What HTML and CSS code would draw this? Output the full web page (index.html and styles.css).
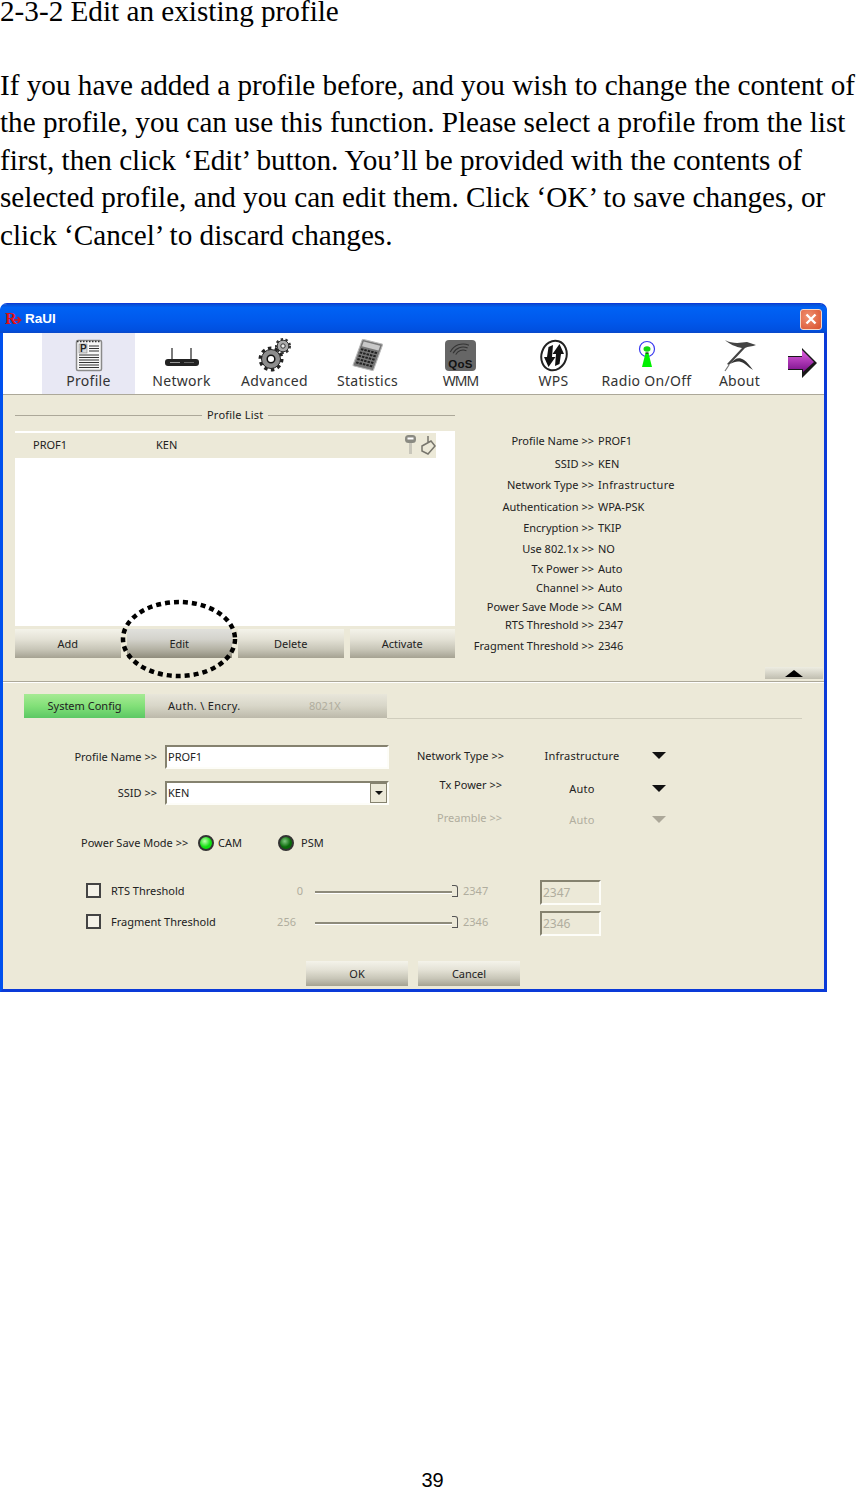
FILE: index.html
```html
<!DOCTYPE html>
<html lang="en">
<head>
    <meta charset="UTF-8">
    <title>2-3-2 Edit an existing profile</title>
    <link rel="stylesheet" href="styles.css">
</head>
<body>
<div class="page">
    <h2 class="heading">2-3-2 Edit an existing profile</h2>
    <p class="intro">If you have added a profile before, and you wish to change the content of<br>
        the profile, you can use this function. Please select a profile from the list<br>
        first, then click ‘Edit’ button. You’ll be provided with the contents of<br>
        selected profile, and you can edit them. Click ‘OK’ to save changes, or<br>
        click ‘Cancel’ to discard changes.</p>

    <div class="window">
        <div class="titlebar">
            <svg class="logo" width="20" height="22" viewBox="0 0 20 22">
                <text x="0" y="16" font-family="Liberation Serif" font-size="16" font-weight="bold" fill="#e01010">R</text>
                <path d="M9 12h6M12.500 9l3 3-3 3" fill="none" stroke="#e01010" stroke-width="1.600"/>
            </svg>
            <span class="title">RaUI</span>
            <span class="close">
                <svg width="12" height="12" viewBox="0 0 12 12"><path d="M1.500 1.500l9 9M10.500 1.500l-9 9" stroke="#fff" stroke-width="2.400"/></svg>
            </span>
        </div>

        <div class="toolbar">
            <div class="tool tool-on">
                <svg width="30" height="33" viewBox="0 0 30 33">
                    <rect x="2.500" y="1.500" width="25" height="30" rx="1.500" fill="#f7f7f7" stroke="#8a8a8a" stroke-width="1.500"/>
                    <path d="M3 2.500h24" stroke="#333" stroke-width="1.500" stroke-dasharray="1.500 1.500"/>
                    <rect x="5" y="5" width="8" height="9" fill="#d8d8d8" stroke="#777" stroke-width=".5"/>
                    <text x="6" y="13" font-family="Liberation Sans" font-size="10" font-weight="bold" fill="#222">P</text>
                    <path d="M15 7h10M15 9.500h10M15 12h10M5 16h20M5 18.500h20M5 21h20M5 23.500h20M5 26h20M5 28.500h20" stroke="#333" stroke-width="1.100"/>
                </svg>
                <span>Profile</span>
            </div>
            <div class="tool">
                <svg width="36" height="33" viewBox="0 0 36 33">
                    <path d="M8 9v12M27 9v12" stroke="#444" stroke-width="1.400"/>
                    <rect x="1" y="20" width="34" height="7" rx="3" fill="#222"/>
                    <path d="M6 23.500h10" stroke="#999" stroke-width="1"/>
                    <path d="M20 23.500h10" stroke="#666" stroke-width="1"/>
                </svg>
                <span>Network</span>
            </div>
            <div class="tool">
                <svg width="36" height="35" viewBox="0 0 36 35">
                    <circle cx="14" cy="22" r="10.500" fill="none" stroke="#222" stroke-width="4" stroke-dasharray="3.300 3.300"/>
                    <circle cx="14" cy="22" r="9.500" fill="#8c8c8c" stroke="#222"/>
                    <circle cx="14" cy="22" r="3.800" fill="#fff" stroke="#111" stroke-width="1.500"/>
                    <circle cx="26" cy="9" r="6.500" fill="none" stroke="#333" stroke-width="3" stroke-dasharray="2.300 2.300"/>
                    <circle cx="26" cy="9" r="5.800" fill="#aaa" stroke="#333"/>
                    <circle cx="26" cy="9" r="2.200" fill="#eee" stroke="#333"/>
                </svg>
                <span>Advanced</span>
            </div>
            <div class="tool">
                <svg width="34" height="33" viewBox="0 0 34 33">
                    <g transform="rotate(14 17 16) skewX(-6)">
                        <rect x="8" y="2" width="21" height="28" rx="1" fill="#777" stroke="#bbb"/>
                        <rect x="10" y="4" width="17" height="5" fill="#c8c8c8"/>
                        <path d="M10 12h17M10 15.500h17M10 19h17M10 22.500h17M10 26h17" stroke="#222" stroke-width="2" stroke-dasharray="2.500 1"/>
                    </g>
                </svg>
                <span>Statistics</span>
            </div>
            <div class="tool">
                <svg width="33" height="33" viewBox="0 0 33 33">
                    <rect x="1" y="1" width="31" height="31" rx="4" fill="#666"/>
                    <path d="M11 19a8 8 0 0 1 8-8M8 19a11 11 0 0 1 11-11M5 19a14 14 0 0 1 14-14" transform="rotate(25 19 19)" fill="none" stroke="#333" stroke-width="1.100"/>
                    <text x="16.500" y="29" text-anchor="middle" font-family="Liberation Sans" font-size="11.500" font-weight="bold" fill="#111">QoS</text>
                </svg>
                <span class="tight">WMM</span>
            </div>
            <div class="tool">
                <svg width="32" height="33" viewBox="0 0 32 33">
                    <ellipse cx="16" cy="16.500" rx="12.500" ry="15" transform="rotate(18 16 16.500)" fill="#fff" stroke="#222" stroke-width="2"/>
                    <path d="M15 6l-1 12h3.500l-7 10-4.500-10h3l1.500-10z" fill="#111"/>
                    <path d="M17 27l1-12h-3.500l7-10 4.500 10h-3l-1.500 10z" fill="#111"/>
                </svg>
                <span>WPS</span>
            </div>
            <div class="tool">
                <svg width="20" height="33" viewBox="0 0 20 33">
                    <circle cx="10" cy="10" r="7.500" fill="#fff" stroke="#3a3af0" stroke-width="1.200"/>
                    <ellipse cx="10" cy="10" rx="3.500" ry="2.800" fill="#10d810"/>
                    <path d="M8.500 14h3l3.500 14h-10z" fill="#00f000"/>
                    <path d="M8.500 14h3" stroke="#111" stroke-width="1.200"/>
                </svg>
                <span>Radio On/Off</span>
            </div>
            <div class="tool">
                <svg width="38" height="33" viewBox="0 0 38 33">
                    <path d="M4 1c7 4 15 3 22 2l9 3c-4 2-8 1-11 3L8 26 6 25 21 9C15 8 8 5 4 1z" fill="#444"/>
                    <path d="M9 25c5-6 9-7 14-4 3 2 6 6 9 10-5-3-8-7-12-8-4-1-7 0-11 2z" fill="#333"/>
                    <path d="M4 32l4-6" stroke="#777" stroke-width="1.200"/>
                </svg>
                <span>About</span>
            </div>
            <svg class="more" width="31" height="32" viewBox="0 0 31 32">
                <defs>
                    <linearGradient id="arrowFill" x1="0" y1="0" x2="0" y2="1">
                        <stop offset="0" stop-color="#e060e0"/>
                        <stop offset="1" stop-color="#7a108a"/>
                    </linearGradient>
                </defs>
                <path d="M1 9h14V1l15 15-15 15v-8H1z" fill="#181818"/>
                <path d="M1 10h14V3l12 12-11 10v-3H1z" fill="url(#arrowFill)"/>
            </svg>
        </div>

        <div class="upper">
            <div class="upper-main">
                <div class="list-side">
                    <div class="legend"><span>Profile List</span></div>
                    <div class="list">
                        <div class="list-row">
                            <span class="cell-name">PROF1</span>
                            <span class="cell-ssid">KEN</span>
                            <svg class="row-icons" width="32" height="22" viewBox="0 0 32 22">
                                <rect x="1" y="1" width="11" height="8" rx="3.500" fill="#8a8a82"/>
                                <rect x="3.500" y="3.500" width="6" height="2" fill="#fff"/>
                                <path d="M6.500 9v11" stroke="#c8c6ba" stroke-width="3"/>
                                <path d="M24 2v7M18 12l9-5 4 5-7 8-6-3z" fill="none" stroke="#77756c" stroke-width="1.500"/>
                            </svg>
                        </div>
                    </div>
                    <div class="list-btns">
                        <button class="btn">Add</button>
                        <button class="btn btn-hot">Edit</button>
                        <button class="btn">Delete</button>
                        <button class="btn">Activate</button>
                        <svg class="ring" width="122" height="82" viewBox="0 0 122 82">
                            <ellipse cx="59" cy="40" rx="56" ry="37" fill="none" stroke="#000" stroke-width="4.500" stroke-dasharray="5 4"/>
                        </svg>
                    </div>
                </div>
                <div class="details">
                    <span class="key">Profile Name &gt;&gt;</span><span>PROF1</span>
                    <span class="key">SSID &gt;&gt;</span><span>KEN</span>
                    <span class="key">Network Type &gt;&gt;</span><span class="wide-val">Infrastructure</span>
                    <span class="key">Authentication &gt;&gt;</span><span>WPA-PSK</span>
                    <span class="key">Encryption &gt;&gt;</span><span>TKIP</span>
                    <span class="key">Use 802.1x &gt;&gt;</span><span>NO</span>
                    <span class="key">Tx Power &gt;&gt;</span><span>Auto</span>
                    <span class="key">Channel &gt;&gt;</span><span>Auto</span>
                    <span class="key">Power Save Mode &gt;&gt;</span><span>CAM</span>
                    <span class="key">RTS Threshold &gt;&gt;</span><span>2347</span>
                    <span class="key">Fragment Threshold &gt;&gt;</span><span>2346</span>
                </div>
            </div>
            <div class="up-row">
                <div class="up-btn"><i class="tri-up"></i></div>
            </div>
        </div>

        <div class="lower">
            <div class="tabs">
                <div class="tab tab-on">System Config</div>
                <div class="tab tab-off">
                    <span class="auth">Auth. \ Encry.</span>
                    <span class="muted">8021X</span>
                </div>
                <div class="tab-rest"></div>
            </div>

            <div class="form-top">
                <div class="form-left">
                    <div class="field">
                        <label>Profile Name &gt;&gt;</label>
                        <div class="sunken">PROF1</div>
                    </div>
                    <div class="field">
                        <label>SSID &gt;&gt;</label>
                        <div class="sunken">KEN<i class="combo-btn"><i class="tri-down tri-small"></i></i></div>
                    </div>
                </div>
                <div class="form-right">
                    <span class="opt-key">Network Type &gt;&gt;</span>
                    <span class="opt-val">Infrastructure</span>
                    <i class="tri-down"></i>
                    <span class="opt-key opt-up">Tx Power &gt;&gt;</span>
                    <span class="opt-val">Auto</span>
                    <i class="tri-down"></i>
                    <span class="opt-key opt-pre muted">Preamble &gt;&gt;</span>
                    <span class="opt-val muted">Auto</span>
                    <i class="tri-down tri-muted"></i>
                </div>
            </div>

            <div class="power">
                <span class="power-key">Power Save Mode &gt;&gt;</span>
                <i class="led led-on"></i>
                <span class="power-cam">CAM</span>
                <i class="led led-off"></i>
                <span class="power-psm">PSM</span>
            </div>

            <div class="thresholds">
                <i class="check"></i>
                <span>RTS Threshold</span>
                <span class="muted min">0</span>
                <div class="slider"></div>
                <span class="muted">2347</span>
                <div class="sunken sunken-off muted">2347</div>

                <i class="check"></i>
                <span>Fragment Threshold</span>
                <span class="muted min min-wide">256</span>
                <div class="slider"></div>
                <span class="muted">2346</span>
                <div class="sunken sunken-off muted">2346</div>
            </div>

            <div class="actions">
                <button class="btn">OK</button>
                <button class="btn">Cancel</button>
            </div>
        </div>
    </div>

    <div class="page-no">39</div>
</div>
</body>
</html>
```

FILE: styles.css
```css
*{
    margin: 0;
    padding: 0;
    box-sizing: border-box;
}
body{
    background: #fff;
    overflow: hidden;
}
.page{
    height: 1488px;
    display: flex;
    flex-direction: column;
    overflow: hidden;
    font-family: "Liberation Serif", serif;
    color: #000;
}
.heading{
    font-size: 29.2px;
    font-weight: normal;
    line-height: 23px;
    height: 23px;
    white-space: nowrap;
}
.intro{
    font-size: 29.2px;
    line-height: 37.5px;
    margin-top: 43.5px;
    white-space: nowrap;
}
.page-no{
    margin-top: auto;
    text-align: center;
    font-family: "Liberation Sans", sans-serif;
    font-size: 20px;
    line-height: 16px;
    margin-left: 8px;
}

/* the RaUI window */
.window{
    width: 827px;
    height: 689px;
    margin-top: 49px;
    flex: none;
    background: #ece9d8;
    border: 3px solid #0a3ad8;
    border-left-color: #0050ee;
    border-top-width: 1px;
    border-radius: 7px 7px 0 0;
    font-family: "Noto Sans", sans-serif;
    font-size: 11px;
    line-height: 16px;
    color: #222;
}
.titlebar{
    height: 29px;
    margin: 0 -3px;
    padding: 1px 5px 0 5px;
    display: flex;
    align-items: center;
    background: linear-gradient(#0a4cd0, #0062f4 12%, #0058ec 60%, #0050e0 90%, #0a48c8);
    border-radius: 7px 7px 0 0;
}
.logo{
    flex: none;
}
.title{
    color: #fff;
    font-family: "Liberation Sans", sans-serif;
    font-weight: bold;
    font-size: 13.5px;
}
.close{
    margin-left: auto;
    width: 22px;
    height: 21px;
    display: flex;
    align-items: center;
    justify-content: center;
    background: radial-gradient(circle at 35% 35%, #f09070, #d8502c);
    border: 1px solid #f4d8c8;
    border-radius: 3px;
}

.toolbar{
    height: 62px;
    padding-left: 39px;
    display: flex;
    background: #fff;
    border-bottom: 1px solid #aca899;
}
.tool{
    width: 93px;
    flex: none;
    display: flex;
    flex-direction: column;
    align-items: center;
    justify-content: flex-end;
    padding-bottom: 5px;
    font-size: 14px;
    line-height: 17px;
    letter-spacing: .3px;
    color: #333;
}
.tool svg{
    flex: none;
}
.tool-on{
    background: #e8e8f4;
}
.tool .tight{
    letter-spacing: -1px;
}
.more{
    margin: 14px 0 0 1px;
    flex: none;
}

.upper{
    height: 287px;
    border-bottom: 1px solid #aca899;
    box-shadow: 0 1px 0 #fff;
}
.upper-main{
    display: flex;
    height: 263px;
}
.list-side{
    width: 440px;
    margin-left: 12px;
    flex: none;
    padding-top: 12px;
}
.legend{
    display: flex;
    align-items: center;
    gap: 5px;
    height: 16px;
    letter-spacing: .2px;
}
.legend::before,
.legend::after{
    content: "";
    flex: 1;
    height: 1px;
    background: #aca899;
}
.legend::before{
    flex: none;
    width: 187px;
}
.list{
    height: 195px;
    margin-top: 8px;
    padding-top: 2px;
    background: #fff;
}
.list-row{
    width: 421px;
    height: 25px;
    display: flex;
    align-items: center;
    position: relative;
    padding-bottom: 1px;
    background: #ece9d8;
}
.cell-name{
    width: 141px;
    padding-left: 18px;
}
.row-icons{
    position: absolute;
    right: 0;
    top: 1px;
}
.list-btns{
    position: relative;
    display: grid;
    grid-template-columns: repeat(4, 1fr);
    gap: 6px;
    margin-top: 3px;
}
.btn{
    height: 29px;
    border: 0;
    font-family: inherit;
    font-size: 11px;
    color: #222;
    background: linear-gradient(#f4f3ea, #e4e2d6 35%, #c8c6b8 70%, #a5a292);
}
.btn-hot{
    background: linear-gradient(#e0e0dc, #d4d3cc 35%, #b4b2a4 70%, #8f8c7c);
}
.ring{
    position: absolute;
    left: 105px;
    top: -30px;
    pointer-events: none;
}
.details{
    display: grid;
    grid-template-columns: 134px auto;
    grid-template-rows: 23px 21px 22px 21px 21px 20px 19px 19px 18px 21px 16px;
    column-gap: 4px;
    justify-content: start;
    margin: 38px 0 0 5px;
    height: 226px;
    white-space: nowrap;
}
.key{
    text-align: right;
}
.wide-val{
    letter-spacing: .35px;
}
.up-row{
    display: flex;
    justify-content: flex-end;
    padding-right: 1px;
    margin-top: 9px;
}
.up-btn{
    width: 58px;
    height: 12px;
    display: flex;
    justify-content: center;
    align-items: flex-end;
    padding-bottom: 2px;
    background: linear-gradient(#eeede2, #c0beb0);
}
.tri-up{
    width: 0;
    height: 0;
    border-left: 9px solid transparent;
    border-right: 9px solid transparent;
    border-bottom: 7px solid #000;
}
.tri-down{
    display: block;
    width: 0;
    height: 0;
    border-left: 7px solid transparent;
    border-right: 7px solid transparent;
    border-top: 7px solid #111;
}
.tri-small{
    border-left-width: 4px;
    border-right-width: 4px;
    border-top-width: 4px;
}
.tri-muted{
    border-top-color: #aca899;
}
.muted{
    color: #b0ad9e;
}

.lower{
    padding-top: 12px;
}
.tabs{
    display: flex;
    height: 25px;
    margin: 0 22px 0 21px;
}
.tab{
    height: 24px;
    line-height: 24px;
}
.tab-on{
    width: 121px;
    text-align: center;
    background: linear-gradient(#a6ea94, #82e078 50%, #5cc864);
}
.tab-off{
    width: 242px;
    display: flex;
    background: linear-gradient(#e8e6da, #d8d6c8 50%, #bcb9aa);
}
.auth{
    width: 164px;
    padding-left: 23px;
    letter-spacing: .3px;
}
.tab-rest{
    flex: 1;
    border-bottom: 1px solid #d0cdbd;
}
.form-top{
    display: flex;
    margin-top: 26px;
    height: 83px;
}
.form-left{
    width: 386px;
    flex: none;
    display: flex;
    flex-direction: column;
    gap: 12px;
}
.field{
    display: flex;
    align-items: center;
    height: 24px;
}
.field label{
    width: 154px;
    text-align: right;
    flex: none;
    margin-right: 8px;
}
.sunken{
    flex: 1;
    height: 100%;
    position: relative;
    padding: 2px 0 0 1px;
    background: #fff;
    border: 2px solid;
    border-color: #85826f #fdfdf8 #fdfdf8 #85826f;
    color: #222;
}
.sunken-off{
    background: #ece9d8;
    color: #b0ad9e;
}
.combo-btn{
    position: absolute;
    right: 0;
    top: 0;
    bottom: 0;
    width: 17px;
    display: flex;
    align-items: center;
    justify-content: center;
    background: #ece9d8;
    border: 1px solid #85826f;
}
.form-right{
    margin-left: 27px;
    padding-top: 3px;
    display: grid;
    grid-template-columns: 88px 84px 14px;
    grid-template-rows: 33px 31px 16px;
    column-gap: 32px;
    align-items: start;
    white-space: nowrap;
}
.opt-val{
    margin-left: 8px;
    text-align: center;
    letter-spacing: .2px;
}
.opt-key{
    text-align: right;
}
.opt-up{
    padding-right: 2px;
    margin-top: -4px;
}
.opt-pre{
    padding-right: 2px;
    margin-top: -2px;
}
.form-right .tri-down{
    margin-top: 4px;
}
.power{
    display: flex;
    align-items: center;
    height: 16px;
    margin-top: 7px;
    padding-left: 78px;
}
.power-key{
    width: 117px;
    flex: none;
}
.led{
    width: 16px;
    height: 16px;
    flex: none;
    border-radius: 50%;
    border: 2px solid #333;
}
.led-on{
    background: radial-gradient(circle at 40% 35%, #c0ffb0, #10e010 55%);
}
.led-off{
    background: radial-gradient(circle at 40% 35%, #80c880, #0a6a0a 55%);
}
.power-cam{
    width: 60px;
    margin-left: 4px;
}
.power-psm{
    margin-left: 7px;
}
.thresholds{
    display: grid;
    grid-template-columns: 25px 149px 43px 160px 77px 61px;
    grid-auto-rows: 25px;
    row-gap: 6px;
    align-items: center;
    margin: 27px 0 0 83px;
    white-space: nowrap;
}
.check{
    width: 15px;
    height: 15px;
    border: 2px solid #444;
    background: #f4f2e8;
}
.min{
    text-align: right;
}
.min-wide{
    padding-right: 7px;
}
.slider{
    height: 3px;
    margin: 4px 0 0 12px;
    width: 142px;
    background: #8d8a7a;
    border-bottom: 1px solid #fff;
    position: relative;
}
.slider::after{
    content: "";
    position: absolute;
    right: -1px;
    top: -6px;
    width: 5px;
    height: 10px;
    border: 1px solid #555;
    border-left: 0;
    border-radius: 0 3px 0 0;
    background: #ece9d8;
}
.thresholds .sunken{
    height: 25px;
    margin-top: 4px;
    padding: 3px 0 0 1px;
    font-size: 12px;
}
.actions{
    display: flex;
    gap: 10px;
    margin: 27px 0 0 303px;
}
.actions .btn{
    width: 102px;
    height: 25px;
}
```
